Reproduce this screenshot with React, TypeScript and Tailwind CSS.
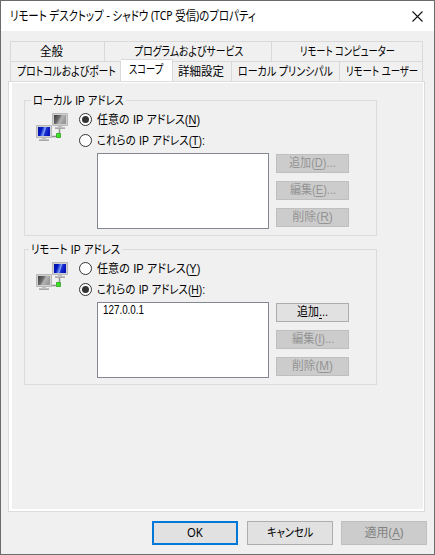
import { useLayoutEffect, useRef, useState, type ReactNode } from "react";

/* Text run condensed horizontally to a fixed width. */
function Fit({ w, className = "", children }: { w: number; className?: string; children: ReactNode }) {
  const ref = useRef<HTMLSpanElement>(null);
  const [scale, setScale] = useState(1);
  useLayoutEffect(() => {
    if (ref.current) setScale(w / ref.current.offsetWidth);
  }, [w]);
  return (
    <span className={`block shrink-0 whitespace-nowrap ${className}`} style={{ width: w }}>
      <span ref={ref} className="inline-block origin-left whitespace-pre" style={{ transform: `scaleX(${scale})` }}>
        {children}
      </span>
    </span>
  );
}

function Key({ k }: { k: string }) {
  return (
    <>
      (<span className="underline underline-offset-2">{k}</span>)
    </>
  );
}

function NetworkIcon({ local }: { local: boolean }) {
  const id = local ? "l" : "r";
  return (
    <svg width="32" height="28" viewBox="0 0 32 28" className="block">
      <defs>
        <linearGradient id={`blue-${id}`} x1="0" x2="1" y1="0" y2="0.25">
          <stop offset="0" stopColor="#0010a0" />
          <stop offset="0.35" stopColor="#0418c4" />
          <stop offset="0.5" stopColor="#4a6ae6" />
          <stop offset="0.62" stopColor="#8ca4f4" />
          <stop offset="0.7" stopColor="#1c34d4" />
          <stop offset="1" stopColor="#0714bc" />
        </linearGradient>
        <linearGradient id={`gray-${id}`} x1="0" x2="1" y1="0" y2="0.4">
          <stop offset="0" stopColor="#3c3c3c" />
          <stop offset="0.45" stopColor="#6c6c6c" />
          <stop offset="0.65" stopColor="#b4b4b4" />
          <stop offset="1" stopColor="#999" />
        </linearGradient>
      </defs>
      <path d="M22 13h4v1h3v2h-10v-2h3z" fill="#c0c0c0" />
      <path d="M19 15.500h10" stroke="#a8a8a8" />
      <path d="M23.500 16v5M15 23.500h6" stroke="#8f8f8f" strokeWidth="1.500" />
      <path d="M16.500 0.500h15v12h-15z" fill="#d0d0d0" stroke="#b8b8b8" />
      <path d="M18 2h12v9H18z" fill={local ? `url(#gray-${id})` : `url(#blue-${id})`} />
      <path d="M6 25h4v1h3v2H3v-2h3z" fill="#c0c0c0" />
      <path d="M3 27.500h10" stroke="#a8a8a8" />
      <path d="M0.500 12.500h15v12H.5z" fill="#d0d0d0" stroke="#b8b8b8" />
      <path d="M2 14h12v9H2z" fill={local ? `url(#blue-${id})` : `url(#gray-${id})`} />
      <path d="M20.500 20.500h4v4h-4z" fill="#3fe02b" stroke="#3cb02c" />
    </svg>
  );
}

function Radio({ checked, w, children }: { checked?: boolean; w: number; children: ReactNode }) {
  return (
    <div className="flex h-[21px] items-center">
      <span className="flex size-[13px] shrink-0 items-center justify-center rounded-full border border-[#333] bg-white">
        {checked && <span className="size-[7px] rounded-full bg-[#333]" />}
      </span>
      <Fit w={w} className="ml-[5px] text-[12px] leading-[20px]">{children}</Fit>
    </div>
  );
}

function SideButton({ w, enabled, children }: { w: number; enabled?: boolean; children: ReactNode }) {
  return (
    <button
      className={`flex h-[19px] w-[73px] items-center justify-center border text-[12px] leading-[17px] ${
        enabled ? "border-[#adadad] bg-[#e1e1e1] text-black" : "border-[#bfbfbf] bg-[#cccccc] text-[#949494]"
      }`}
    >
      <Fit w={w}>{children}</Fit>
    </button>
  );
}

type GroupProps = {
  local: boolean;
  title: string;
  titleW: number;
  radios: ReactNode;
  entry?: string;
  buttons: ReactNode;
};

function AddressGroup({ local, title, titleW, radios, entry, buttons }: GroupProps) {
  return (
    <fieldset className="relative h-[136px] w-[353px] border border-[#dcdcdc] font-['Liberation_Sans','Noto_Sans_CJK_JP',sans-serif] [word-spacing:0.500px]">
      <div className={`absolute -top-[9px] bg-[#f0f0f0] px-[2px] text-[12px] leading-[18px] ${local ? "left-[6px]" : "left-[4px]"}`}>
        <Fit w={titleW}>{title}</Fit>
      </div>
      <div className="flex pt-[8px] pl-[11px]">
        <div className="w-[43px] pt-[4px]">
          <NetworkIcon local={local} />
        </div>
        <div>{radios}</div>
      </div>
      <div className="mt-[2px] flex pl-[72px]">
        <div className="h-[76px] w-[172px] border border-[#828790] bg-white pl-[5px] text-[12px] leading-[14px]">
          {entry && <Fit w={41}>{entry}</Fit>}
        </div>
        <div className="ml-[7px] flex flex-col gap-[8px] pt-[1px]">{buttons}</div>
      </div>
    </fieldset>
  );
}

function Tab({ className, w, children }: { className: string; w: number; children: ReactNode }) {
  return (
    <div className={`flex shrink-0 items-center justify-center border-r border-[#d9d9d9] ${className}`}>
      <Fit w={w}>{children}</Fit>
    </div>
  );
}

export default function App() {
  return (
    <div className="flex h-[555px] w-[435px] flex-col overflow-hidden border border-[#6b6b6e] bg-[#f0f0f0] font-['Noto_Sans','Noto_Sans_CJK_JP',sans-serif] text-[12px] text-black [font-feature-settings:'palt']">
      <header className="flex h-[30px] shrink-0 items-center justify-between bg-white pr-[11px] pl-[9px]">
        <Fit w={246} className="text-[13px]">リモート デスクトップ - シャドウ (TCP 受信)のプロパティ</Fit>
        <svg width="11" height="11" viewBox="0 0 11 11">
          <path d="M0.500 0.500l10 10M10.500 0.500l-10 10" stroke="#111" strokeWidth="1.100" />
        </svg>
      </header>

      <nav className="mt-[10px] ml-[9px] w-[413px] shrink-0 leading-[18px]">
        <div className="flex h-[20px] border-t border-l border-[#d9d9d9]">
          <Tab className="w-[94px] pt-px pr-[12px]" w={23}>全般</Tab>
          <Tab className="w-[167px] pt-px" w={109}>プログラムおよびサービス</Tab>
          <Tab className="w-[151px] pt-px" w={95}>リモート コンピューター</Tab>
        </div>
        <div className="flex h-[20px] border-t border-l border-[#d9d9d9]">
          <Tab className="w-[110px] pt-px pl-[2px]" w={99}>プロトコルおよびポート</Tab>
          <Tab className="-mt-[3px] h-[23px] w-[52px] border-t bg-white pr-[2px] pb-[3px]" w={34}>スコープ</Tab>
          <Tab className="w-[59px] pt-px pr-[2px]" w={46}>詳細設定</Tab>
          <Tab className="w-[108px] pt-px" w={95}>ローカル プリンシパル</Tab>
          <Tab className="w-[83px] pt-px pl-[2px]" w={72}>リモート ユーザー</Tab>
        </div>
      </nav>

      <main className="ml-[7px] h-[431px] w-[417px] shrink-0 border border-[#dcdcdc] bg-white pt-px pr-px pb-[2px] pl-[3px]">
        <div className="flex h-full flex-col gap-[13px] bg-[#f0f0f0] pt-[17px] pl-[12px]">
          <AddressGroup
            local
            title="ローカル IP アドレス"
            titleW={91}
            radios={
              <>
                <Radio checked w={103}>任意の IP アドレス<Key k="N" /></Radio>
                <Radio w={108}>これらの IP アドレス<Key k="T" />:</Radio>
              </>
            }
            buttons={
              <>
                <SideButton w={47}>追加<Key k="D" />...</SideButton>
                <SideButton w={46}>編集<Key k="E" />...</SideButton>
                <SideButton w={41}>削除<Key k="R" /></SideButton>
              </>
            }
          />
          <AddressGroup
            local={false}
            title="リモート IP アドレス"
            titleW={89}
            entry="127.0.0.1"
            radios={
              <>
                <Radio w={103}>任意の IP アドレス<Key k="Y" /></Radio>
                <Radio checked w={108}>これらの IP アドレス<Key k="H" />:</Radio>
              </>
            }
            buttons={
              <>
                <SideButton enabled w={31}>追加<span className="underline underline-offset-2">.</span>..</SideButton>
                <SideButton w={42}>編集<Key k="I" />...</SideButton>
                <SideButton w={41}>削除<Key k="M" /></SideButton>
              </>
            }
          />
        </div>
      </main>

      <footer className="mt-[9px] flex shrink-0 pl-[151px]">
        <button className="flex h-[24px] w-[86px] items-center justify-center border-2 border-[#0078d7] bg-[#e1e1e1]">
          <Fit w={16}>OK</Fit>
        </button>
        <button className="ml-[9px] flex h-[24px] w-[86px] items-center justify-center border border-[#adadad] bg-[#e1e1e1]">
          <Fit w={46}>キャンセル</Fit>
        </button>
        <button className="ml-[8px] flex h-[24px] w-[86px] items-center justify-center border border-[#bfbfbf] bg-[#cccccc] text-[#838383]">
          <Fit w={39}>適用<Key k="A" /></Fit>
        </button>
      </footer>
    </div>
  );
}
